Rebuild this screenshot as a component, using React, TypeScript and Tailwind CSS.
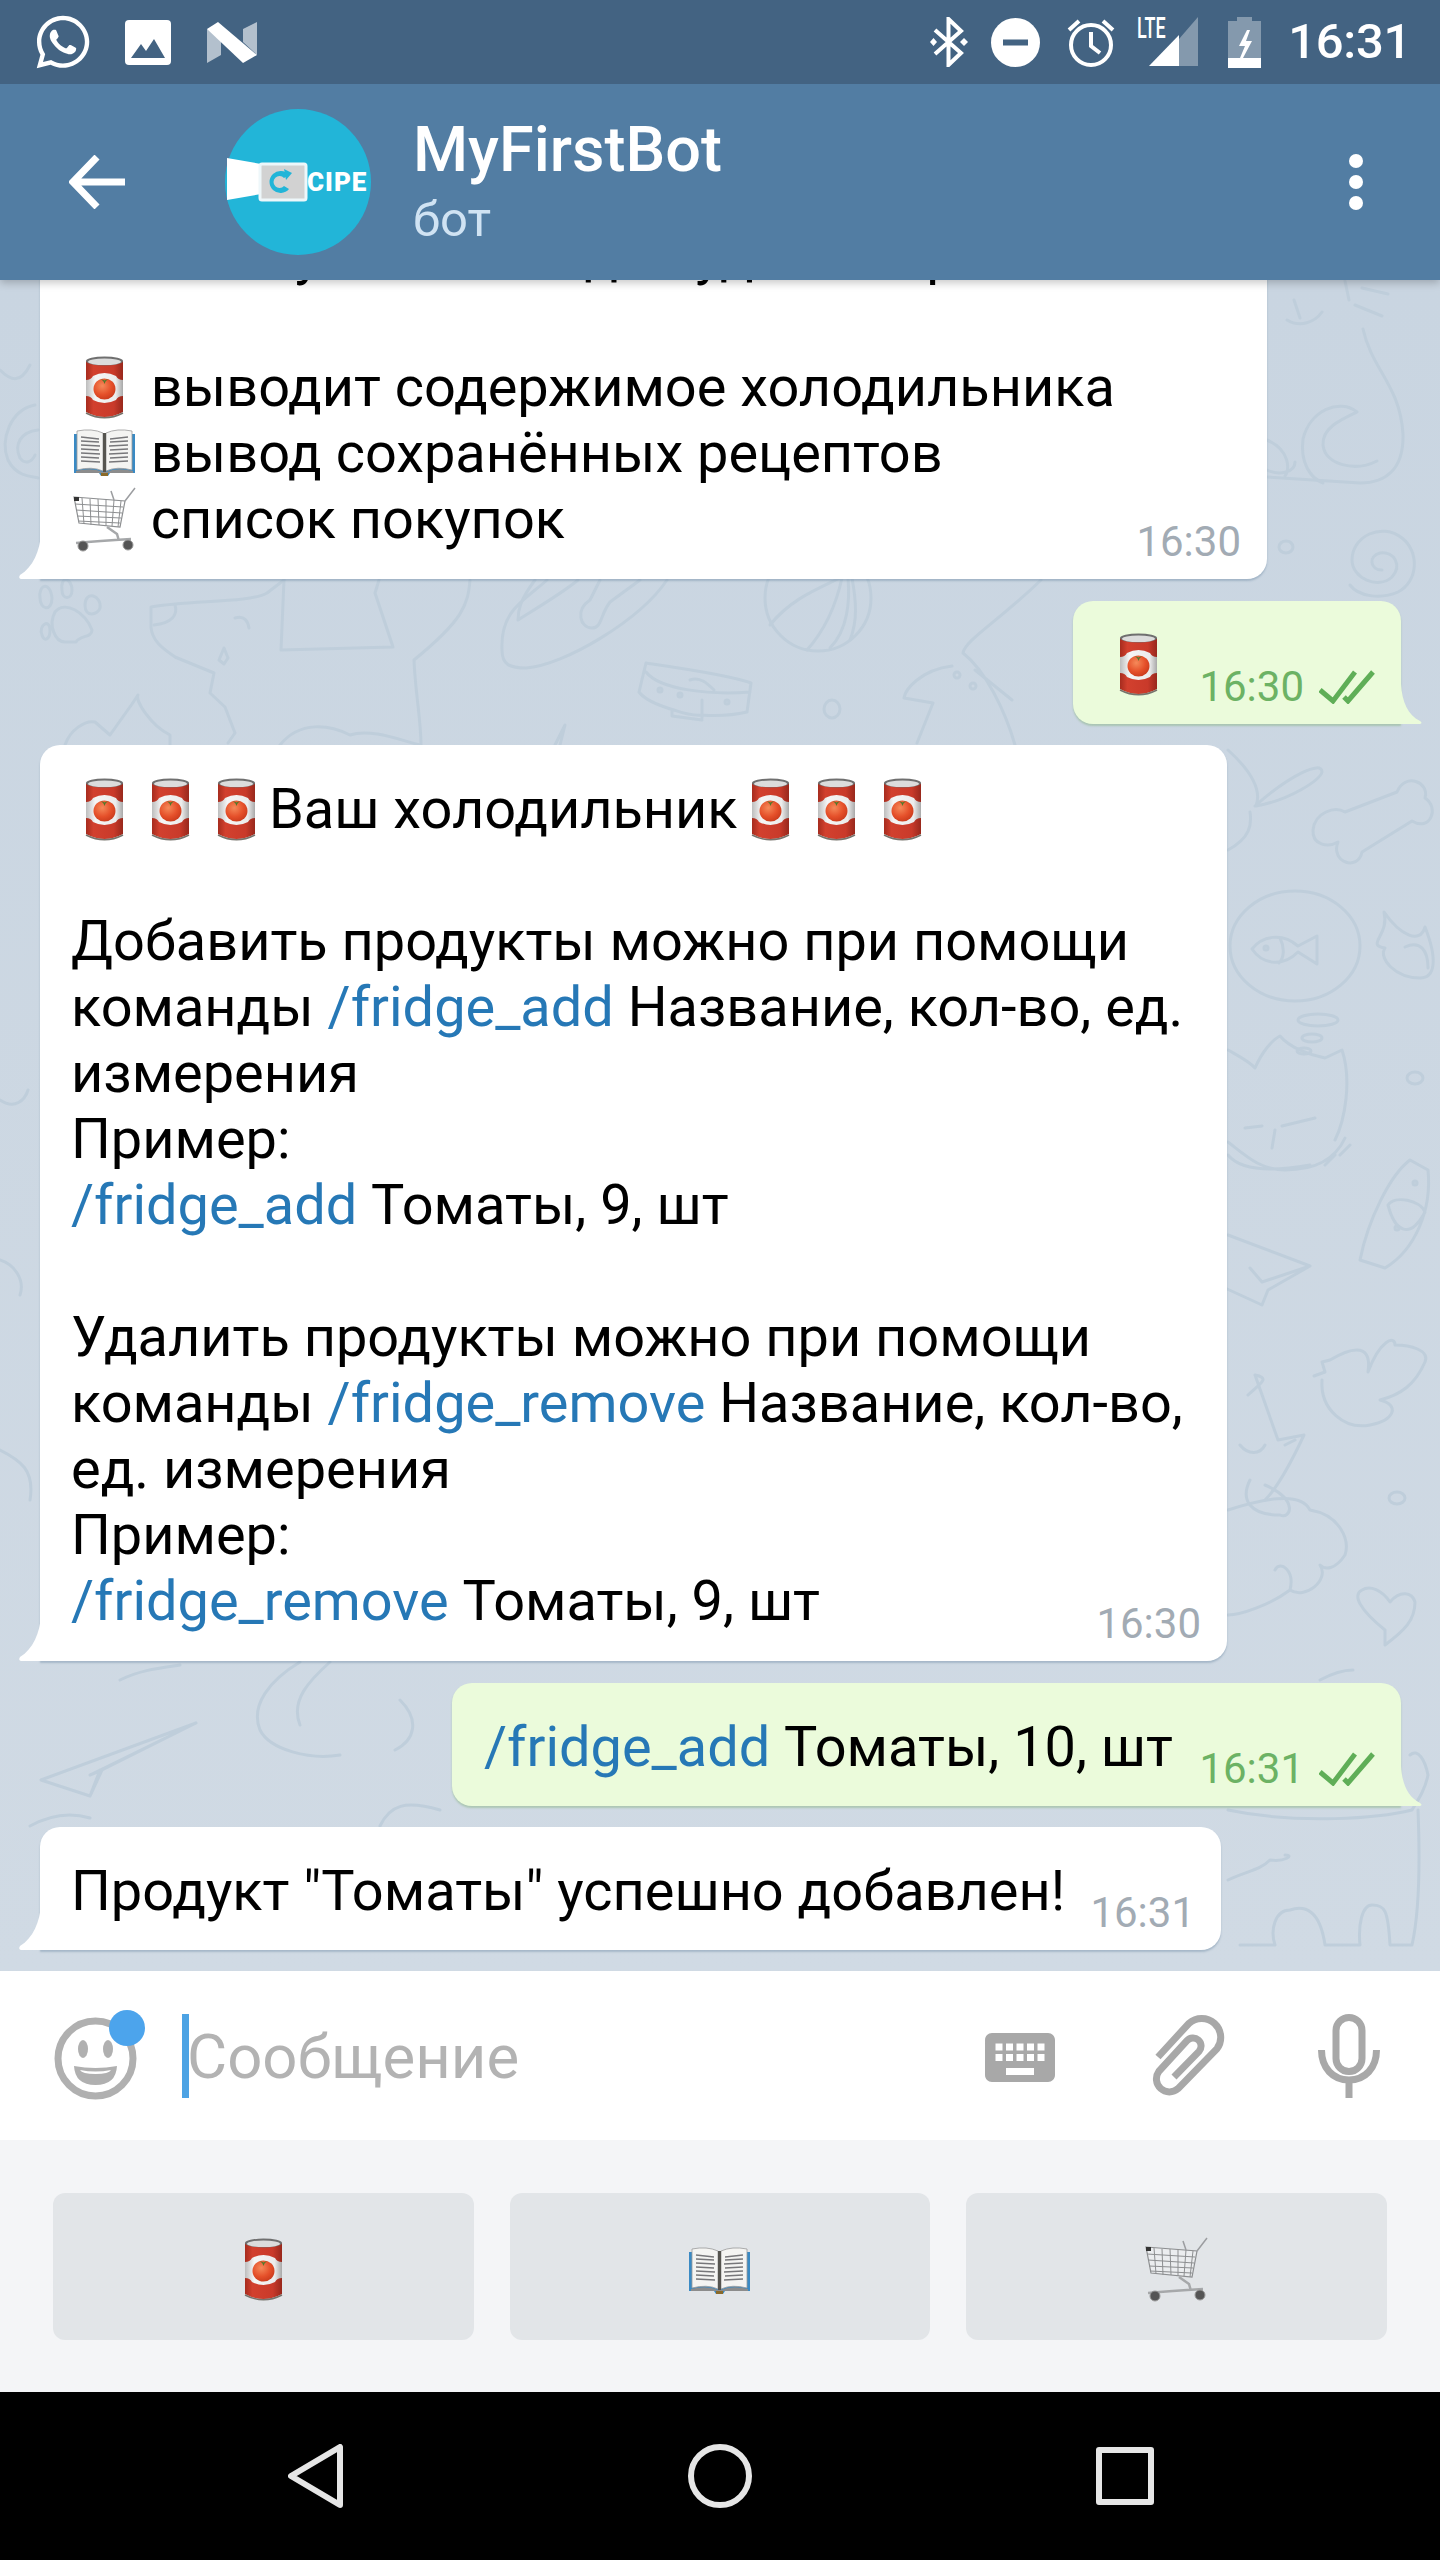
import { FaWhatsapp } from "react-icons/fa";

function TomatoCan() {
  return (
    <svg width="39" height="63" viewBox="0 0 39 63" className="block">
      <defs>
        <linearGradient id="canRed" x1="0" x2="1" y1="0" y2="0">
          <stop offset="0" stopColor="#a62c1e" />
          <stop offset="0.2" stopColor="#d2402e" />
          <stop offset="0.75" stopColor="#c93a2a" />
          <stop offset="1" stopColor="#98281c" />
        </linearGradient>
        <linearGradient id="canWhite" x1="0" x2="1" y1="0" y2="0">
          <stop offset="0" stopColor="#bdbdbd" />
          <stop offset="0.25" stopColor="#f5f5f5" />
          <stop offset="0.8" stopColor="#ececec" />
          <stop offset="1" stopColor="#a8a8a8" />
        </linearGradient>
        <radialGradient id="canTomato" cx="0.4" cy="0.35" r="0.7">
          <stop offset="0" stopColor="#f58a5a" />
          <stop offset="0.6" stopColor="#e5502a" />
          <stop offset="1" stopColor="#c93a1c" />
        </radialGradient>
      </defs>
      <path d="M1 5V56Q19.500 66 38 56V5Z" fill="url(#canRed)" />
      <path d="M1 57Q19.500 66.500 38 57" fill="none" stroke="#77736c" strokeWidth="1.500" />
      <path d="M1 24Q6 24 8 20Q19.500 14 31 20Q33 24 38 24V40Q33 40 31 44Q19.500 50 8 44Q6 40 1 40Z" fill="url(#canWhite)" />
      <ellipse cx="19.500" cy="33" rx="11" ry="10.500" fill="url(#canTomato)" />
      <path d="M16 23L19.500 24.500L23 23L20.500 25.500L19.500 28L18.500 25.500Z" fill="#4d7a2a" />
      <ellipse cx="19.500" cy="5" rx="18.500" ry="4.500" fill="#6f6f6f" />
      <ellipse cx="19.500" cy="5.800" rx="16.500" ry="3.300" fill="#dcdcdc" />
    </svg>
  );
}

function OpenBook() {
  return (
    <svg width="61" height="48" viewBox="0 0 61 48" className="block">
      <path d="M0 5H61V44H36L34 47H27L25 44H0Z" fill="#3a8ac4" />
      <path d="M3 2Q18 -1 29 4V42Q18 37 3 41Z" fill="#f4f4f2" stroke="#9a9a9a" strokeWidth="0.800" />
      <path d="M58 2Q43 -1 32 4V42Q43 37 58 41Z" fill="#f4f4f2" stroke="#9a9a9a" strokeWidth="0.800" />
      <path d="M29 4H32V44H29Z" fill="#55544f" />
      <path
        d="M7 8L25 10M7 12L25 13M7 16L26 17M7 20L25 21M7 24L26 25M7 28L25 29M7 32L26 33M36 10L54 8M36 13L54 12M35 17L54 16M36 21L54 20M35 25L54 24M36 29L54 28M35 33L54 32"
        stroke="#77777a"
        strokeWidth="1.300"
      />
      <path d="M2 42Q18 38 29 43H32Q43 38 59 42V44H2Z" fill="#8c8c8c" />
      <path d="M27 44H34V47H27Z" fill="#8a6a2a" />
    </svg>
  );
}

function Cart() {
  return (
    <svg width="63" height="65" viewBox="0 0 63 65" className="block" fill="none">
      <path d="M1 10L52 14L47 40L6 36Z" fill="#ffffff55" stroke="#8d8f91" strokeWidth="1.200" />
      <path
        d="M9 11L11 37M17 12L18 38M25 12L26 38M33 13L33 39M41 13L39 39M48 14L45 40M2 17L50 20M3 23L49 26M4 29L48 31M5 34L47 36"
        stroke="#8d8f91"
        strokeWidth="1"
      />
      <path d="M52 14L62 1M41 13L38 4" stroke="#9b9da0" strokeWidth="1.500" />
      <path d="M34 40L44 47L46 54M3 56Q25 54 58 52" stroke="#a6a8aa" strokeWidth="2.500" />
      <rect x="1" y="10" width="5" height="4" fill="#333" />
      <circle cx="10" cy="59" r="5" fill="#555" stroke="#999" />
      <circle cx="55" cy="58" r="5" fill="#555" stroke="#999" />
    </svg>
  );
}

function Emoji({ kind }: { kind: "can" | "book" | "cart" }) {
  return (
    <span className="inline-flex h-[66px] w-[66px] items-center justify-center align-top">
      {kind === "can" && <TomatoCan />}
      {kind === "book" && <OpenBook />}
      {kind === "cart" && <Cart />}
    </span>
  );
}

function Checks() {
  return (
    <svg width="56" height="34" viewBox="0 0 56 34" fill="none" stroke="#5fae57" strokeWidth="5">
      <path d="M1 20L14 31L36 2" />
      <path d="M25 27L29 31L54 2" />
    </svg>
  );
}

function Link({ children }: { children: string }) {
  return <span className="text-[#2678b6]">{children}</span>;
}

function Time({ children, out }: { children: string; out?: boolean }) {
  if (out) {
    return (
      <div className="absolute bottom-[12px] right-[26px] flex items-center gap-[15px] text-[42px] leading-[50px] text-[#6cb264]">
        <span>{children}</span>
        <Checks />
      </div>
    );
  }
  return (
    <span className="absolute bottom-[12px] right-[26px] text-[42px] leading-[50px] text-[#a2abb4]">
      {children}
    </span>
  );
}

function Incoming({ className, children }: { className: string; children: React.ReactNode }) {
  return (
    <div className={`relative ml-[40px] shrink-0 rounded-[20px] rounded-bl-none bg-white pl-[31px] pt-[31px] whitespace-nowrap shadow-[0_2px_2px_rgba(90,120,150,0.35)] ${className}`}>
      <svg width="24" height="46" viewBox="0 0 24 46" className="absolute bottom-0 left-[-22px]">
        <path d="M23 0C22 18 15 34 2 42Q0 45 3 46H23Z" fill="#ffffff" />
      </svg>
      {children}
    </div>
  );
}

function Outgoing({ className, children }: { className: string; children: React.ReactNode }) {
  return (
    <div className={`relative mr-[39px] shrink-0 self-end rounded-[20px] rounded-br-none bg-[#ebfbdb] pb-[26px] pl-[32px] pt-[31px] whitespace-nowrap shadow-[0_2px_2px_rgba(120,170,110,0.4)] ${className}`}>
      <svg width="22" height="40" viewBox="0 0 22 40" className="absolute bottom-0 left-full">
        <path d="M0 0C1 18 7 31 19 37Q22 39 19 40H0Z" fill="#ebfbdb" />
      </svg>
      {children}
    </div>
  );
}

function ChatPattern() {
  return (
    <svg
      viewBox="0 280 1440 1691"
      className="absolute inset-0 h-full w-full"
      fill="none"
      stroke="#bfcedb"
      strokeWidth="3"
      strokeLinecap="round"
      strokeLinejoin="round"
    >
      {/* right strip, top */}
      <path d="M1363 329C1372 370 1400 385 1403 434C1404 470 1385 483 1360 483L1267 477" />
      <path d="M1377 461C1355 472 1325 465 1323 445C1322 428 1340 420 1357 412C1340 398 1310 410 1303 439C1300 462 1310 478 1323 483" />
      <path d="M1287 320C1300 328 1315 322 1322 312M1294 300L1300 318M1362 288L1388 294M1355 305L1382 316M1345 281L1349 300" />
      <path d="M1267 440C1290 450 1290 470 1285 476M1267 470C1280 476 1295 472 1295 462" />
      <ellipse cx="1286" cy="547" rx="7" ry="6" />
      <path d="M1382 570C1370 570 1368 556 1380 553C1395 551 1402 566 1392 577C1378 590 1352 578 1352 560C1352 536 1382 522 1402 538C1420 552 1418 582 1398 592C1380 600 1358 596 1350 585" />
      <path d="M1313 830C1312 845 1328 848 1338 842C1330 862 1358 872 1362 852L1412 821C1430 832 1440 808 1425 798C1430 782 1405 772 1397 792L1345 812C1335 806 1315 812 1313 830Z" />
      <path d="M1228 750C1250 770 1262 790 1256 806C1290 800 1320 780 1322 772C1322 760 1290 775 1255 806M1228 850C1250 838 1252 825 1250 812" />
      <ellipse cx="1295" cy="946" rx="65" ry="55" />
      <path d="M1252 949C1262 936 1282 932 1298 946L1317 936V964L1298 952C1282 968 1262 964 1252 949ZM1280 938C1285 948 1284 958 1279 963" />
      <circle cx="1266" cy="948" r="2" />
      <path d="M1384 912C1390 935 1365 945 1385 948C1378 958 1395 978 1420 978C1435 978 1438 960 1425 927C1420 945 1400 935 1384 912ZM1405 947C1420 940 1428 950 1428 968" />
      <ellipse cx="1318" cy="1020" rx="20" ry="6" />
      <ellipse cx="1312" cy="1038" rx="10" ry="4" />
      <ellipse cx="1304" cy="1051" rx="7" ry="3" />
      <path d="M1228 1050C1242 1058 1250 1062 1255 1068C1262 1052 1272 1040 1280 1036C1290 1048 1310 1055 1325 1058L1342 1050C1352 1080 1345 1120 1335 1140M1245 1128L1262 1126M1282 1126L1315 1118M1275 1130L1272 1148" />
      <ellipse cx="1415" cy="1078" rx="8" ry="6" />
      {/* right strip, lower */}
      <path d="M1228 1142C1245 1155 1260 1170 1285 1170C1315 1170 1335 1160 1345 1138M1350 1145L1340 1155M1325 1165L1335 1155M1228 1155C1240 1170 1270 1172 1310 1165" />
      <path d="M1360 1260C1368 1220 1390 1175 1410 1160L1428 1170C1432 1210 1415 1250 1385 1268ZM1388 1205C1395 1195 1420 1200 1425 1212C1410 1240 1395 1232 1388 1205Z" />
      <circle cx="1415" cy="1183" r="2" />
      <circle cx="1397" cy="1228" r="2" />
      <path d="M1228 1235L1310 1266L1268 1290L1262 1305L1225 1288M1310 1266L1262 1282L1250 1268" />
      <path d="M1314 1376L1325 1372L1322 1362L1330 1360C1355 1345 1372 1345 1368 1372C1380 1340 1395 1335 1395 1345C1410 1345 1430 1350 1425 1362C1415 1385 1400 1395 1380 1400C1400 1405 1395 1420 1370 1425C1345 1430 1320 1410 1322 1380" />
      <path d="M1248 1395C1258 1385 1272 1378 1255 1375M1255 1375L1278 1440L1304 1435C1290 1465 1275 1490 1265 1500M1240 1445C1248 1455 1260 1455 1265 1445M1285 1445L1295 1440" />
      <path d="M1250 1480C1240 1500 1250 1515 1280 1515C1290 1520 1300 1500 1265 1485" />
      <path d="M1228 1510C1260 1500 1300 1490 1310 1510C1340 1515 1350 1540 1345 1555C1335 1570 1325 1570 1320 1565C1330 1580 1305 1600 1290 1590C1270 1605 1240 1615 1228 1615M1275 1570C1280 1560 1295 1570 1290 1590" />
      <ellipse cx="1397" cy="1498" rx="8" ry="6" />
      <path d="M1385 1630C1360 1610 1352 1595 1362 1590C1370 1585 1382 1590 1390 1602C1400 1590 1412 1592 1415 1602C1415 1620 1405 1630 1385 1645Z" />
      <path d="M1320 1680C1335 1672 1345 1670 1353 1670" />
      <path d="M1410 1755C1418 1748 1425 1760 1428 1775C1425 1790 1418 1800 1412 1810M1418 1810C1420 1860 1420 1910 1412 1945L1390 1945C1388 1910 1385 1905 1372 1905C1362 1905 1358 1925 1360 1945H1325C1320 1910 1305 1905 1290 1910C1275 1910 1270 1930 1275 1945H1240M1228 1810C1300 1825 1380 1818 1412 1810M1228 1880C1250 1870 1260 1870 1270 1860C1285 1862 1295 1855 1285 1855" />
      {/* band above the long message */}
      <path d="M40 598C38 585 50 580 52 598C52 612 40 610 40 598ZM62 590C60 575 72 578 72 590C72 600 62 600 62 590ZM85 605C85 590 102 595 100 608C98 615 85 618 85 605ZM42 635C38 625 50 618 50 630C50 640 44 642 42 635ZM65 642C55 642 48 625 55 612C65 600 85 612 92 630C92 638 80 635 76 642Z" />
      <path d="M284 580L267 593C250 603 190 600 151 607L151 627C152 642 165 650 175 657L214 673L210 693L225 707L235 733L228 743" />
      <path d="M175 605C178 615 172 623 154 625M235 618C245 615 248 622 249 628" />
      <path d="M224 648L219 660L224 664L228 658Z" />
      <path d="M284 580L281 650L393 647L375 593L379 580M470 580C468 605 463 620 414 660C415 690 421 720 421 745" />
      <path d="M547 580C525 600 500 610 502 650C502 665 510 668 526 668C565 665 640 620 667 580M535 580C520 600 518 610 518 620C525 615 560 595 578 580" />
      <path d="M600 580L590 600C575 610 580 628 592 628C602 628 600 615 610 602L640 580" />
      <circle cx="818" cy="598" r="53" />
      <path d="M770 625C790 600 815 590 840 578M807 650C825 630 836 605 842 578M850 640C858 620 856 600 852 578M830 648C848 630 850 600 848 578" />
      <path d="M646 663C680 668 730 675 751 683L747 712C730 716 715 716 702 715C690 716 680 712 674 710C660 706 645 700 639 692ZM646 672C660 690 710 695 750 692M690 680C700 676 708 684 714 690M702 700V718M672 710L672 716L702 720" />
      <circle cx="660" cy="690" r="2" />
      <circle cx="680" cy="695" r="2" />
      <circle cx="727" cy="702" r="2" />
      <ellipse cx="832" cy="709" rx="8" ry="9" />
      <path d="M1041 580C1000 620 965 640 963 653M952 666C920 670 905 690 904 698L933 703L917 743M963 653C985 670 1005 710 1015 745M975 670L1012 700" />
      <circle cx="957" cy="675" r="3" />
      <circle cx="973" cy="686" r="3" />
      <path d="M65 745C70 730 85 720 95 722L110 735L132 704L138 695C135 700 150 725 170 735L170 745" />
      <path d="M280 745C300 720 330 725 350 735C370 728 400 740 420 745M555 745L565 725L560 745" />
      {/* left strip */}
      <path d="M35 405C10 410 0 440 8 460C18 480 38 476 38 478M38 430C20 432 14 445 20 458C25 465 32 462 35 455" />
      <path d="M0 370C10 380 20 385 30 365M0 1100C15 1110 25 1100 28 1090M0 1260C15 1265 25 1280 20 1295M0 1450C20 1460 35 1470 30 1500" />
      {/* band before the last messages */}
      <path d="M196 1723L41 1780L90 1796L102 1770ZM196 1723L90 1775L102 1770M90 1796L100 1770" />
      <path d="M300 1662C270 1680 250 1705 260 1730C270 1750 310 1760 340 1755M330 1662C310 1680 290 1700 300 1725M400 1700C420 1720 415 1740 395 1750M120 1680C140 1670 160 1668 180 1665" />
      <path d="M380 1826C390 1805 405 1800 440 1810M30 1826C50 1815 70 1812 90 1818" />
    </svg>
  );
}

function StatusIcons() {
  return (
    <div className="ml-auto flex items-center pr-[29px]">
      <svg width="45" height="50" viewBox="0 0 45 50" fill="none" stroke="#fff" strokeWidth="4">
        <path d="M9 13L35 36L22.500 48V2L35 14L9 37" />
        <path d="M4 25L7.500 21L11 25L7.500 29ZM34 25L38 21L42 25L38 29Z" fill="#fff" stroke="none" />
      </svg>
      <svg width="49" height="49" viewBox="0 0 49 49" className="ml-[20px]">
        <circle cx="24.500" cy="24.500" r="24.500" fill="#fff" />
        <rect x="12" y="21.500" width="25" height="6" fill="#436382" />
      </svg>
      <svg width="48" height="49" viewBox="0 0 48 49" fill="none" stroke="#fff" strokeWidth="4" className="ml-[27px]">
        <circle cx="24" cy="27" r="20" />
        <path d="M24 14V28L33 35M2 12L12 3M46 12L36 3" />
      </svg>
      <div className="relative ml-[22px] h-[50px] w-[61px]">
        <svg width="61" height="49" viewBox="0 0 61 49" className="absolute left-0 top-0">
          <path d="M61 0V49H42V22Z" fill="#ffffff" fillOpacity="0.35" />
          <path d="M12 49L42 18V49Z" fill="#fff" />
        </svg>
        <span className="absolute left-0 top-[-4px] origin-left scale-x-[0.62] text-[29px] leading-[30px] font-medium text-white">LTE</span>
      </div>
      <svg width="33" height="51" viewBox="0 0 33 51" className="ml-[30px]">
        <path d="M9 0H24V4H33V51H0V4H9Z" fill="#ffffff" fillOpacity="0.35" />
        <path d="M0 41H33V51H0Z" fill="#fff" />
        <path d="M19 13L11 29H17L12 41H15L24 24H18L22 13Z" fill="#fff" />
      </svg>
      <span className="ml-[27px] text-[49px] leading-[50px] font-medium tracking-[-0.3px] text-white">16:31</span>
    </div>
  );
}

export default function App() {
  return (
    <div className="flex h-[2560px] w-[1440px] flex-col overflow-hidden bg-black font-[family-name:Roboto,sans-serif]">
      {/* status bar */}
      <div className="z-20 flex h-[84px] shrink-0 items-center bg-[#436382] pl-[35px]">
        <FaWhatsapp size={60} color="#ffffff" className="-ml-[2px]" />
        <svg width="46" height="45" viewBox="0 0 46 45" className="ml-[32px]">
          <rect width="46" height="45" rx="4" fill="#fff" />
          <path d="M6 38L16 24L21 31L29 19L40 38Z" fill="#436382" />
        </svg>
        <svg width="50" height="41" viewBox="0 0 50 41" className="ml-[36px]">
          <path d="M0 7L14 15V33L0 41ZM36 7L50 0V33L36 20Z" fill="#ffffff" fillOpacity="0.6" />
          <path d="M0 7L11 0L50 33L36 41Z" fill="#fff" />
        </svg>
        <StatusIcons />
      </div>

      {/* toolbar */}
      <div className="z-10 flex h-[196px] shrink-0 items-center bg-[#527da3] shadow-[0_3px_8px_rgba(0,0,0,0.22)]">
        <svg width="56" height="54" viewBox="0 0 56 54" fill="none" stroke="#fff" strokeWidth="7" className="ml-[69px]">
          <path d="M56 27H4M28 2L4 27L28 52" />
        </svg>
        <div className="relative ml-[100px] h-[146px] w-[146px] shrink-0 rounded-full bg-[#22b5d8]">
          <svg width="82" height="46" viewBox="0 0 82 46" className="absolute left-[2px] top-[49px]">
            <path d="M0 0L34 6V36L0 42Z" fill="#fff" />
            <rect x="33" y="6" width="46" height="36" rx="2" fill="#d2d2d2" stroke="#eef7fa" strokeWidth="3" />
            <path d="M62 17A11 11 0 1 0 62 31L57 28A6 6 0 1 1 57 20Z" fill="#22b5d8" />
            <path d="M57 11L65 15L59 22Z" fill="#22b5d8" />
          </svg>
          <span className="absolute left-[82px] top-[60px] text-[26px] leading-[26px] font-black tracking-[1px] text-white">CIPE</span>
        </div>
        <div className="ml-[42px] flex flex-col">
          <span className="text-[63px] leading-[70px] font-medium text-white">MyFirstBot</span>
          <span className="mt-[5px] text-[49px] leading-[60px] text-[#d0e3f3]">бот</span>
        </div>
        <div className="ml-auto mr-[77px] flex flex-col gap-[7px]">
          <span className="h-[14px] w-[14px] rounded-full bg-white" />
          <span className="h-[14px] w-[14px] rounded-full bg-white" />
          <span className="h-[14px] w-[14px] rounded-full bg-white" />
        </div>
      </div>

      {/* messages */}
      <div className="relative flex min-h-0 flex-1 flex-col justify-end gap-[21.5px] overflow-hidden bg-linear-to-b from-[#c9d5e1] to-[#d0dae4] pb-[21px] text-[55.9px] leading-[66px] text-black">
        <ChatPattern />
        <Incoming className="w-[1227px] pb-[27px]">
          Используйте меню для удобной работы
          <br />
          <br />
          <Emoji kind="can" /> выводит содержимое холодильника
          <br />
          <Emoji kind="book" /> вывод сохранённых рецептов
          <br />
          <Emoji kind="cart" /> список покупок
          <Time>16:30</Time>
        </Incoming>
        <Outgoing className="w-[328px]">
          <Emoji kind="can" />
          <Time out>16:30</Time>
        </Outgoing>
        <Incoming className="w-[1187px] pb-[27px]">
          <Emoji kind="can" />
          <Emoji kind="can" />
          <Emoji kind="can" />
          Ваш холодильник
          <Emoji kind="can" />
          <Emoji kind="can" />
          <Emoji kind="can" />
          <br />
          <br />
          Добавить продукты можно при помощи
          <br />
          команды <Link>/fridge_add</Link> Название, кол-во, ед.
          <br />
          измерения
          <br />
          Пример:
          <br />
          <Link>/fridge_add</Link> Томаты, 9, шт
          <br />
          <br />
          Удалить продукты можно при помощи
          <br />
          команды <Link>/fridge_remove</Link> Название, кол-во,
          <br />
          ед. измерения
          <br />
          Пример:
          <br />
          <Link>/fridge_remove</Link> Томаты, 9, шт
          <Time>16:30</Time>
        </Incoming>
        <Outgoing className="w-[949px]">
          <Link>/fridge_add</Link> Томаты, 10, шт
          <Time out>16:31</Time>
        </Outgoing>
        <Incoming className="w-[1181px] pb-[26px]">
          Продукт "Томаты" успешно добавлен!
          <Time>16:31</Time>
        </Incoming>
      </div>

      {/* input row */}
      <div className="flex h-[169px] shrink-0 items-center bg-white pl-[54px] pr-[60px]">
        <div className="relative mt-[6px] h-[83px] w-[83px] shrink-0">
          <svg width="83" height="83" viewBox="0 0 83 83" fill="none">
            <circle cx="41.500" cy="41.500" r="37.500" stroke="#b0b0b0" strokeWidth="7" />
            <ellipse cx="29" cy="32" rx="5" ry="9" fill="#b0b0b0" />
            <ellipse cx="54" cy="32" rx="5" ry="9" fill="#b0b0b0" />
            <path d="M20 49Q41.500 53 63 49Q62 68 41.500 68Q21 68 20 49Z" fill="#b0b0b0" />
            <path d="M26 53Q41.500 56 57 53Q55 57 41.500 57Q28 57 26 53Z" fill="#fff" />
          </svg>
          <span className="absolute left-[55px] top-[-7px] h-[36px] w-[36px] rounded-full bg-[#4ca4ec]" />
        </div>
        <div className="ml-[45px] flex items-center">
          <span className="h-[84px] w-[7px] bg-[#4da3e4]" />
          <span className="-ml-[2px] pt-[3px] text-[61.700px] leading-[70px] text-[#b3b3b3]">Сообщение</span>
        </div>
        <svg width="70" height="49" viewBox="2 5 20 14" fill="#a8a8a8" className="ml-auto mt-[3px]">
          <path d="M20 5H4c-1.100 0-1.990.9-1.990 2L2 17c0 1.100.9 2 2 2h16c1.100 0 2-.9 2-2V7c0-1.100-.9-2-2-2zm-9 3h2v2h-2V8zm0 3h2v2h-2v-2zM8 8h2v2H8V8zm0 3h2v2H8v-2zm-1 2H5v-2h2v2zm0-3H5V8h2v2zm9 7H8v-2h8v2zm0-4h-2v-2h2v2zm0-3h-2V8h2v2zm3 3h-2v-2h2v2zm0-3h-2V8h2v2z" />
        </svg>
        <svg width="74" height="83" viewBox="0 0 74 83" fill="none" stroke="#a8a8a8" strokeWidth="7" className="ml-[96px]">
          <path d="M7 43L38 9.300A19 19 0 0 1 66 34.700L27 74.700A13 13 0 0 1 7.900 57.300L36 26.600A8 8 0 0 1 48 37.400L23 63" />
        </svg>
        <svg width="62" height="84" viewBox="0 0 62 84" fill="none" stroke="#a8a8a8" strokeWidth="7" className="ml-[93px]">
          <rect x="18" y="3.500" width="26" height="54" rx="13" />
          <path d="M3.500 36C3.500 54 15 66 31 66C47 66 58.500 54 58.500 36M31 66V84" />
        </svg>
      </div>

      {/* bot keyboard */}
      <div className="grid h-[252px] shrink-0 grid-cols-3 gap-[36px] bg-[#f4f5f7] px-[53px] pt-[53px] pb-[52px]">
        <div className="flex items-center justify-center rounded-[12px] bg-[#e2e5e8] pt-[6px]">
          <TomatoCan />
        </div>
        <div className="flex items-center justify-center rounded-[12px] bg-[#e2e5e8] pt-[8px]">
          <OpenBook />
        </div>
        <div className="flex items-center justify-center rounded-[12px] bg-[#e2e5e8] pt-[6px]">
          <Cart />
        </div>
      </div>

      {/* android nav */}
      <div className="flex h-[168px] shrink-0 items-center bg-black">
        <svg width="55" height="64" viewBox="0 0 55 64" fill="none" stroke="#e6e6e6" strokeWidth="6" strokeLinejoin="round" className="ml-[288px]">
          <path d="M3 32L52 3V61Z" />
        </svg>
        <div className="ml-[345px] h-[64px] w-[64px] rounded-full border-[6px] border-[#e6e6e6]" />
        <div className="ml-[344px] h-[58px] w-[58px] rounded-[3px] border-[6px] border-[#e6e6e6]" />
      </div>
    </div>
  );
}
